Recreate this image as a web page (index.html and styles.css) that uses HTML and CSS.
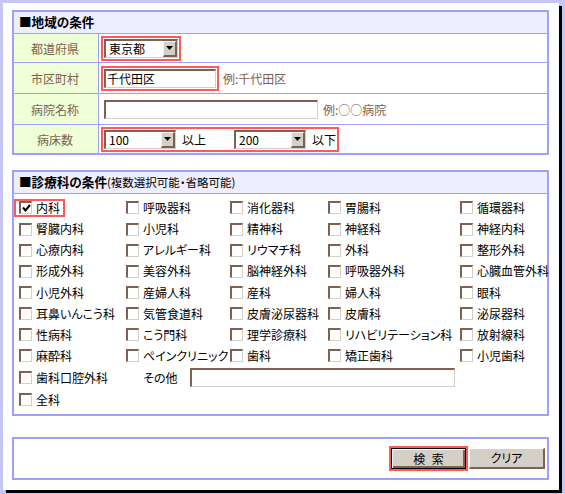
FILE: index.html
```html
<!DOCTYPE html>
<html lang="ja">
<head>
<meta charset="utf-8">
<title>検索条件</title>
<link rel="stylesheet" href="styles.css">
</head>
<body>
<div class="window">

  <section class="box area">
    <div class="box-title">■地域の条件</div>
    <div class="frow h28">
      <div class="flabel">都道府県</div>
      <div class="fval">
        <span class="hl">
          <span class="selwrap w74">
            <select class="sel"><option>東京都</option></select>
            <span class="arrow"><svg width="7" height="4" viewBox="0 0 7 4"><polygon points="0,0 7,0 3.5,4" fill="#000"/></svg></span>
          </span>
        </span>
      </div>
    </div>
    <div class="frow h30">
      <div class="flabel">市区町村</div>
      <div class="fval">
        <span class="hl"><input class="txt w112" type="text" value="千代田区"></span>
        <span class="note n-city">例:千代田区</span>
      </div>
    </div>
    <div class="frow h30">
      <div class="flabel">病院名称</div>
      <div class="fval">
        <input class="txt w214 plain" type="text" value="">
        <span class="note n-hosp">例:○○病院</span>
      </div>
    </div>
    <div class="frow h28 last">
      <div class="flabel">病床数</div>
      <div class="fval">
        <span class="hl beds">
          <span class="selwrap w72">
            <select class="sel"><option>100</option></select>
            <span class="arrow"><svg width="7" height="4" viewBox="0 0 7 4"><polygon points="0,0 7,0 3.5,4" fill="#000"/></svg></span>
          </span>
          <span class="unit">以上</span>
          <span class="selwrap w72 sel2">
            <select class="sel"><option>200</option></select>
            <span class="arrow"><svg width="7" height="4" viewBox="0 0 7 4"><polygon points="0,0 7,0 3.5,4" fill="#000"/></svg></span>
          </span>
          <span class="unit">以下</span>
        </span>
      </div>
    </div>
  </section>

  <section class="box dept">
    <div class="box-title">■診療科の条件<span class="sub">(複数選択可能・省略可能)</span></div>
    <div class="dept-grid">
      <label class="opt checked"><span class="cb"><svg width="9" height="8" viewBox="0 0 9 8"><path d="M1 3.5 L3.5 6.5 L8 1" fill="none" stroke="#000" stroke-width="2"/></svg></span>内科</label>
      <label class="opt"><span class="cb"></span>呼吸器科</label>
      <label class="opt"><span class="cb"></span>消化器科</label>
      <label class="opt"><span class="cb"></span>胃腸科</label>
      <label class="opt"><span class="cb"></span>循環器科</label>

      <label class="opt"><span class="cb"></span>腎臓内科</label>
      <label class="opt"><span class="cb"></span>小児科</label>
      <label class="opt"><span class="cb"></span>精神科</label>
      <label class="opt"><span class="cb"></span>神経科</label>
      <label class="opt"><span class="cb"></span>神経内科</label>

      <label class="opt"><span class="cb"></span>心療内科</label>
      <label class="opt"><span class="cb"></span>アレルギー科</label>
      <label class="opt"><span class="cb"></span>リウマチ科</label>
      <label class="opt"><span class="cb"></span>外科</label>
      <label class="opt"><span class="cb"></span>整形外科</label>

      <label class="opt"><span class="cb"></span>形成外科</label>
      <label class="opt"><span class="cb"></span>美容外科</label>
      <label class="opt"><span class="cb"></span>脳神経外科</label>
      <label class="opt"><span class="cb"></span>呼吸器外科</label>
      <label class="opt"><span class="cb"></span>心臓血管外科</label>

      <label class="opt"><span class="cb"></span>小児外科</label>
      <label class="opt"><span class="cb"></span>産婦人科</label>
      <label class="opt"><span class="cb"></span>産科</label>
      <label class="opt"><span class="cb"></span>婦人科</label>
      <label class="opt"><span class="cb"></span>眼科</label>

      <label class="opt"><span class="cb"></span>耳鼻いんこう科</label>
      <label class="opt"><span class="cb"></span>気管食道科</label>
      <label class="opt"><span class="cb"></span>皮膚泌尿器科</label>
      <label class="opt"><span class="cb"></span>皮膚科</label>
      <label class="opt"><span class="cb"></span>泌尿器科</label>

      <label class="opt"><span class="cb"></span>性病科</label>
      <label class="opt"><span class="cb"></span>こう門科</label>
      <label class="opt"><span class="cb"></span>理学診療科</label>
      <label class="opt"><span class="cb"></span>リハビリテーション科</label>
      <label class="opt"><span class="cb"></span>放射線科</label>

      <label class="opt"><span class="cb"></span>麻酔科</label>
      <label class="opt"><span class="cb"></span>ペインクリニック</label>
      <label class="opt"><span class="cb"></span>歯科</label>
      <label class="opt"><span class="cb"></span>矯正歯科</label>
      <label class="opt"><span class="cb"></span>小児歯科</label>

      <label class="opt"><span class="cb"></span>歯科口腔外科</label>
      <div class="other"><span class="other-label">その他</span><input class="txt other-input" type="text" value=""></div>

      <label class="opt row10"><span class="cb"></span>全科</label>
    </div>
  </section>

  <section class="box actions">
    <span class="hl-btn"><button class="btn btn-default" type="button">検&nbsp;索</button></span>
    <button class="btn" type="button">クリア</button>
  </section>

</div>
</body>
</html>
```

FILE: styles.css
```css
* {
  box-sizing: border-box;
}

html, body {
  margin: 0;
  padding: 0;
}

body {
  width: 565px;
  height: 494px;
  overflow: hidden;
  background: #c6c6f4;
  font-family: "Noto Sans CJK JP", "Noto Sans", sans-serif;
  font-size: 12px;
  font-feature-settings: "palt";
  color: #000;
}

.window {
  margin: 3px 0 0 3px;
  width: 556px;
  height: 487px;
  background: #fff;
  box-shadow: 3px 3px 0 #000;
  padding: 7px 0 0 9px;
}

.box {
  width: 537px;
  border: 2px solid #a0a0f8;
}

.box-title {
  height: 22px;
  background: #eeeeff;
  border-bottom: 1px solid #a0a0f8;
  display: flex;
  align-items: center;
  padding-left: 5px;
  font-weight: bold;
  font-size: 12.6px;
  line-height: 1;
}

.box-title .sub {
  font-weight: normal;
  font-size: 11.5px;
}

/* ---------- area ---------- */

.frow {
  display: flex;
  border-bottom: 1px solid #a0a0f8;
}

.frow.h28 { height: 29px; }
.frow.h30 { height: 31px; }
.frow.last { height: 28px; border-bottom: 0; }

.flabel {
  width: 85px;
  flex: none;
  background: #efffd6;
  border-right: 1px solid #a0a0f8;
  display: flex;
  align-items: center;
  justify-content: center;
  color: #806050;
  padding-right: 2px;
}

.fval {
  flex: 1;
  display: flex;
  align-items: center;
  padding-left: 2px;
}

.hl {
  display: inline-flex;
  align-items: center;
  border: 2px solid #ff5a5a;
  padding: 1px;
}

.hl.beds {
  padding: 1px 1px 1px 1px;
}

.selwrap {
  position: relative;
  display: inline-block;
  height: 19px;
}

.w74 { width: 74px; }
.w72 { width: 72px; }

.sel {
  -webkit-appearance: none;
  appearance: none;
  display: block;
  width: 100%;
  height: 19px;
  margin: 0;
  padding: 0 0 0 3px;
  border-style: solid;
  border-width: 2px 1px 1px 2px;
  border-color: #806050 #d4d0c8 #d4d0c8 #806050;
  border-radius: 0;
  background: #fff;
  font-family: inherit;
  font-size: 12px;
  font-feature-settings: "palt";
  color: #000;
  line-height: 16px;
  outline: none;
}

.arrow {
  position: absolute;
  right: 1px;
  top: 2px;
  width: 14px;
  height: 16px;
  background: #d4d0c8;
  border-style: solid;
  border-width: 1px 2px 2px 1px;
  border-color: #f4f2ee #806050 #806050 #f4f2ee;
  display: flex;
  align-items: center;
  justify-content: center;
}

.arrow svg {
  display: block;
}

.unit {
  margin-left: 6px;
  width: 24px;
}

.sel2 {
  margin-left: 28px;
}

.txt {
  height: 19px;
  margin: 0;
  padding: 0 0 0 1px;
  border-style: solid;
  border-width: 2px 1px 1px 2px;
  border-color: #806050 #d4d0c8 #d4d0c8 #806050;
  border-radius: 0;
  background: #fff;
  font-family: inherit;
  font-size: 12px;
  font-feature-settings: "palt";
  color: #000;
  outline: none;
}

.w112 { width: 112px; }
.w214 { width: 214px; }

.txt.plain {
  margin-left: 3px;
}

.note {
  color: #806050;
}

.n-city { margin-left: 4px; }
.n-hosp { margin-left: 5px; }

/* ---------- departments ---------- */

.dept {
  margin-top: 15px;
}

.dept-grid {
  display: grid;
  grid-template-columns: 107px 104px 98px 132px 1fr;
  grid-template-rows: repeat(8, 21.15px) 22.8px 21.2px;
  align-items: center;
  justify-items: start;
  padding: 3.4px 0;
  height: 220px;
}

.opt {
  display: inline-flex;
  align-items: center;
  height: 18px;
  border: 2px solid transparent;
  padding: 0 3px 0 3px;
  gap: 4px;
  white-space: nowrap;
  line-height: 1;
}

.opt.checked {
  border-color: #ff5a5a;
}

.cb {
  width: 13px;
  height: 13px;
  flex: none;
  border-style: solid;
  border-width: 2px 1px 1px 2px;
  border-color: #806050 #d4d0c8 #d4d0c8 #806050;
  background: #fff;
  display: flex;
  align-items: center;
  justify-content: center;
}

.cb svg {
  display: block;
}

.other {
  grid-column: 2 / 5;
  display: flex;
  align-items: center;
  width: 100%;
}

.other-label {
  padding-left: 22px;
  width: 69px;
  flex: none;
}

.other-input {
  flex: 1;
}

.row10 {
  grid-column: 1;
}

/* ---------- actions ---------- */

.actions {
  margin-top: 21px;
  height: 43px;
  display: flex;
  align-items: center;
  justify-content: flex-end;
  padding-right: 2px;
}

.hl-btn {
  display: inline-flex;
  border: 2px solid #ff5a5a;
  margin-right: 1px;
}

.btn {
  width: 76px;
  height: 21px;
  margin: 0;
  padding: 0;
  background: #d4d0c8;
  border-style: solid;
  border-width: 1px 2px 2px 1px;
  border-color: #fff #806050 #806050 #fff;
  border-radius: 0;
  font-family: inherit;
  font-size: 12px;
  font-feature-settings: "palt";
  color: #000;
  line-height: 1;
  word-spacing: 4px;
}

.btn-default {
  width: 75px;
  border: 1px solid #000;
  box-shadow: inset 1px 1px 0 #fff, inset -2px -2px 0 #806050;
}
```
